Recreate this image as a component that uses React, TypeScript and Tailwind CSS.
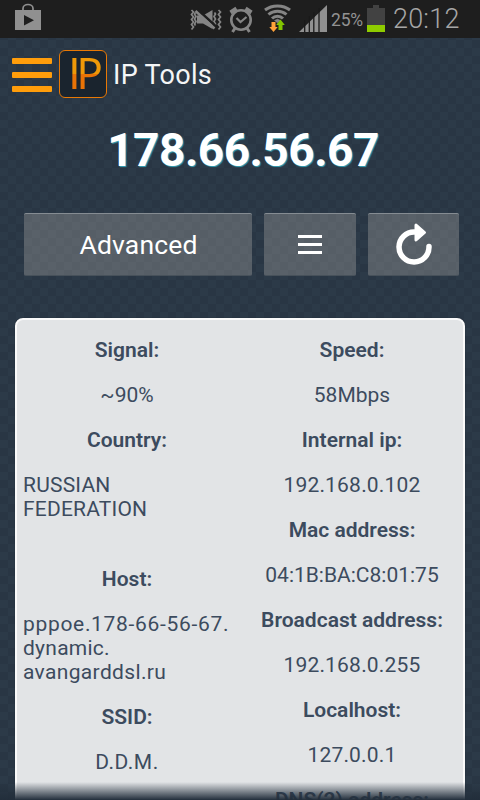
import type { ReactNode } from "react";

function StatusBar() {
  return (
    <div className="flex h-[38px] shrink-0 items-start bg-[#1e1e1e]">
      <svg className="h-[38px] w-[190px] shrink-0" viewBox="0 0 190 38">
        <path d="M23 10V8.500a5 4 0 0 1 10 0V10" fill="none" stroke="#909090" strokeWidth="1.700" />
        <rect x="15" y="10" width="26" height="20" fill="#909090" />
        <path d="M24 15v10.500l10-5.200z" fill="#1e1e1e" />
      </svg>
      <svg className="h-[38px] w-[140px] shrink-0" viewBox="190 0 140 38">
        <g fill="none" stroke="#858585" strokeWidth="1.700">
          <path d="M191.500 10l2 2-2 2.500 2 2.500-2 2.500 2 2.500-2 2.500 2 2.500-2 2.500" />
          <path d="M195.500 12.500l-1 1.500 1.500 2.500-1.500 2.500 1.500 2.500-1.500 2.500 1 1.500" />
          <path d="M214.500 12.500l1 1.500-1.500 2.500 1.500 2.500-1.500 2.500 1.500 2.500-1 1.500" />
          <path d="M218.500 10l2 2-2 2.500 2 2.500-2 2.500 2 2.500-2 2.500 2 2.500-2 2.500" />
        </g>
        <path d="M197 15.500h6l9.500-5.500v19l-9.500-5.500h-6z" fill="#858585" />
        <path d="M197 9L216 26.500" stroke="#1e1e1e" strokeWidth="2.500" />
        <path d="M195.500 11L214.500 28.500" stroke="#858585" strokeWidth="2.500" />
        <g fill="none" stroke="#858585">
          <circle cx="241" cy="20" r="9.700" strokeWidth="2.600" />
          <path d="M236.500 18l4 4 6-5" strokeWidth="2.200" />
          <path d="M230.500 12.500l6-4M251.500 12.500l-6-4" strokeWidth="4" />
          <path d="M235.500 27.500l-3 4.500M246.500 27.500l3 4.500" strokeWidth="3" />
        </g>
        <g fill="none" stroke="#858585" strokeWidth="3">
          <path d="M265 10c7-5.500 18-5.500 25 0" />
          <path d="M268.500 14.500c5-4.500 13-4.500 18 0" />
          <path d="M272 18.500c3-3 8-3 11 0" />
          <path d="M274.500 20.500l3-1.500 3 1.500-3 2.500z" fill="#858585" strokeWidth=".5" />
        </g>
        <path d="M271.500 22h4v5h2.200l-4.200 5-4.200-5h2.200z" fill="#ffa23a" />
        <path d="M278.500 30v-5h-2.300l4.300-5.500 4.300 5.500h-2.300v5z" fill="#82c500" />
        <path d="M299 32L327 5v27z" fill="#909090" />
        <path d="M304.700 20v12M309.300 16v16M313.800 12v20M319 8v24" stroke="#1a1a1a" strokeWidth="1.300" />
      </svg>
      <span className="ml-px w-[35px] shrink-0 whitespace-nowrap pt-[9px] font-[Roboto,sans-serif] text-[17.500px] leading-[22px] tracking-[-0.2px] text-[#929292]">25%</span>
      <svg className="ml-px h-[38px] w-[18px] shrink-0" viewBox="367 0 18 38">
        <path d="M367 8h6V5h6v3h6v17h-18z" fill="#424242" />
        <path d="M367 25h18v7h-18z" fill="#8fcc00" />
      </svg>
      <span className="ml-[8px] shrink-0 whitespace-nowrap pt-[3px] font-[Roboto,sans-serif] text-[27px] leading-8 font-light tracking-[0.2px] text-[#a6a6a6]">20:12</span>
    </div>
  );
}

function Header() {
  return (
    <header className="flex h-[72px] shrink-0 items-center pl-3 pb-px">
      <div className="mt-[3px] flex w-10 flex-col gap-2">
        <i className="h-[6px] rounded-[1px] bg-[#ff9d0b]" />
        <i className="h-[6px] rounded-[1px] bg-[#ff9d0b]" />
        <i className="h-[6px] rounded-[1px] bg-[#ff9d0b]" />
      </div>
      <div className="ml-[7px] flex h-12 w-12 items-center justify-center rounded-[6px] border border-[#e97905] bg-[#1a242e]">
        <span className="bg-[linear-gradient(#ef9908_50%,#e97306_52%)] bg-clip-text pr-[5px] pl-[6px] pb-px font-[Lato,sans-serif] text-[42px] leading-[46px] tracking-[-3.5px] text-transparent">IP</span>
      </div>
      <h1 className="ml-[6px] pt-[2px] font-[Roboto,sans-serif] text-[27px] leading-8 tracking-[0.3px] text-[#f4f5f6]">IP Tools</h1>
    </header>
  );
}

function Tile({ className, label, children }: { className: string; label?: string; children: ReactNode }) {
  return (
    <button aria-label={label} className={`flex h-[63px] items-center justify-center rounded-[2px] border-t border-b border-t-[#858c92] border-b-[#47515a] bg-[#575f68] bg-[conic-gradient(#596169_25%,#565e66_0_50%,#596169_0_75%,#565e66_0)] bg-size-[16px_16px] text-white ${className}`}>
      {children}
    </button>
  );
}

function Cell({ lines, bold, left, className = "" }: { lines: string[]; bold?: boolean; left?: boolean; className?: string }) {
  return (
    <div className={`py-[10.5px] leading-6 whitespace-nowrap ${bold ? "text-[21px] font-semibold" : "text-[21px]"} ${left ? "text-left" : "text-center"} ${className}`}>
      {lines.map((line, i) => (
        <div key={i} className="h-6">{line}</div>
      ))}
    </div>
  );
}

export default function App() {
  return (
    <div className="relative flex h-[800px] w-[480px] flex-col overflow-hidden bg-[#293746] bg-[conic-gradient(#2c3a48_25%,#293644_0_50%,#2c3a48_0_75%,#293644_0)] bg-size-[16px_16px] font-[Roboto,sans-serif]">
      <StatusBar />
      <Header />
      <div className="h-[103px] shrink-0 pt-[12px] pl-[6px] text-center text-[46px] leading-[56px] font-bold tracking-[-0.5px] text-white [text-shadow:1px_1px_1px_#35a4b8]">178.66.56.67</div>
      <div className="flex h-[105px] shrink-0 gap-3 pl-6">
        <Tile className="w-[228px]"><span className="pl-px pt-px text-[26.500px] leading-8 tracking-[0.15px]">Advanced</span></Tile>
        <Tile className="w-[92px]" label="Menu">
          <span className="flex w-[25px] flex-col gap-[5px] pr-px">
            <i className="h-[3px] bg-white" />
            <i className="h-[3px] bg-white" />
            <i className="h-[3px] bg-white" />
          </span>
        </Tile>
        <Tile className="w-[91px]" label="Refresh">
          <svg width="42" height="46" viewBox="392 221 42 46">
            <path d="M413.500 231A15 15 0 1 0 428 245.500" fill="none" stroke="white" strokeWidth="5.500" strokeLinecap="round" />
            <path d="M415 224l8.500 7.500-8.500 7.500z" fill="white" stroke="white" strokeWidth="3" strokeLinejoin="round" />
          </svg>
        </Tile>
      </div>
      <main className="mx-[15px] flex h-[500px] shrink-0 rounded-t-[8px] border-2 border-[#fafafa] bg-[#e2e4e6] pt-[7.500px] text-[#3c4b5e] shadow-[0_0_1px_#17202a]">
        <div className="ml-[6px] w-[208px]">
          <Cell bold lines={["Signal:"]} />
          <Cell lines={["~90%"]} />
          <Cell bold lines={["Country:"]} />
          <Cell left className="mb-px tracking-[0.2px]" lines={["RUSSIAN", "FEDERATION", ""]} />
          <Cell bold lines={["Host:"]} />
          <div className="py-[10.5px] text-[21px] leading-6 whitespace-nowrap">
            <div className="tracking-[0.68px]">pppoe.178-66-56-67.</div>
            <div className="tracking-[0.25px]">dynamic.</div>
            <div className="tracking-[0.35px]">avangarddsl.ru</div>
          </div>
          <Cell bold lines={["SSID:"]} />
          <Cell className="tracking-[0.5px]" lines={["D.D.M."]} />
        </div>
        <div className="ml-[17px] w-[208px]">
          <Cell bold lines={["Speed:"]} />
          <Cell lines={["58Mbps"]} />
          <Cell bold lines={["Internal ip:"]} />
          <Cell className="tracking-[0.2px]" lines={["192.168.0.102"]} />
          <Cell bold lines={["Mac address:"]} />
          <Cell lines={["04:1B:BA:C8:01:75"]} />
          <Cell bold lines={["Broadcast address:"]} />
          <Cell className="tracking-[0.2px]" lines={["192.168.0.255"]} />
          <Cell bold lines={["Localhost:"]} />
          <Cell className="tracking-[0.2px]" lines={["127.0.0.1"]} />
          <Cell bold lines={["DNS(2) address:"]} />
        </div>
      </main>
      <div className="absolute inset-x-0 bottom-0 h-[18px] bg-linear-to-b from-transparent to-[#222e3b]" />
    </div>
  );
}
